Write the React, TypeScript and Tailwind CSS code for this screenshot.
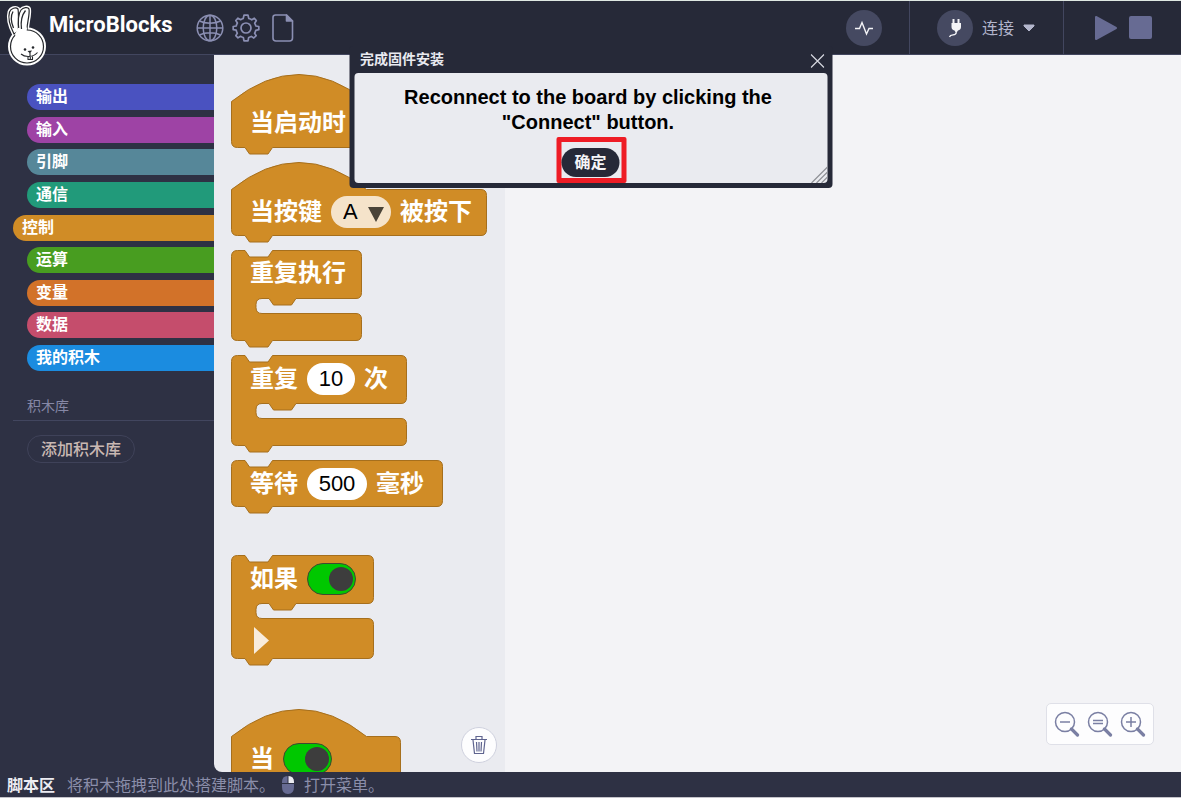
import { useState, type ReactNode } from 'react';

interface Category {
  name: string;
  color: string;
}

const CATEGORIES: Category[] = [
  { name: '输出', color: 'bg-[#4a52c0]' },
  { name: '输入', color: 'bg-[#9e43a5]' },
  { name: '引脚', color: 'bg-[#568799]' },
  { name: '通信', color: 'bg-[#219a7a]' },
  { name: '控制', color: 'bg-[#d08c26]' },
  { name: '运算', color: 'bg-[#489d20]' },
  { name: '变量', color: 'bg-[#d27229]' },
  { name: '数据', color: 'bg-[#c54d6c]' },
  { name: '我的积木', color: 'bg-[#1b8ce0]' },
];

// ---- block outlines ----

const tab = (y: number) => `H41.5 L37 ${y + 6.5} H18.5 L14 ${y}`;
const topEdge = (w: number) => `M6.5 .5 H14 L18.5 7 H37 L41.5 .5 H${w - 6} q5.5 0 5.5 6`;
const bottomEdge = (w: number, y: number) =>
  `V${y - 6} q0 6 -5.5 6 ${tab(y)} H6.5 q-6 0 -6 -6`;

function commandPath(w: number, h: number) {
  return `${topEdge(w)} ${bottomEdge(w, h)} V6.5 q0 -6 6 -6 Z`;
}

function loopPath(w: number, h: number) {
  const mouth = `V42.5 q0 6 -5.5 6 H65 L60.5 55 H42.5 L38 48.5 H31 q-6 0 -6 6 V57.5 q0 6 6 6 H${w - 6} q5.5 0 5.5 6`;
  return `${topEdge(w)} ${mouth} ${bottomEdge(w, h)} V6.5 q0 -6 6 -6 Z`;
}

function hatPath(w: number, h: number) {
  return `M.5 27.5 Q68 -26.5 135.5 27.5 H${w - 6} q5.5 0 5.5 6 ${bottomEdge(w, h)} Z`;
}

interface BlockProps {
  kind: 'hat' | 'command' | 'loop';
  width: number;
  height: number;
  children: ReactNode;
}

function Block({ kind, width, height, children }: BlockProps) {
  const y = height - 0.5;
  const d = kind === 'hat' ? hatPath(width, y) : kind === 'loop' ? loopPath(width, y) : commandPath(width, y);
  return (
    <div className="relative shrink-0" style={{ width, height }}>
      <svg className="absolute inset-0 overflow-visible" width={width} height={height}>
        <path d={d} fill="#d08c26" stroke="#a66f1d" />
      </svg>
      <div
        className={`relative flex items-center gap-[9px] pl-[19px] text-2xl font-bold whitespace-nowrap text-white ${
          kind === 'hat' ? 'pt-[34px]' : 'pt-2'
        }`}
      >
        {children}
      </div>
    </div>
  );
}

const Label = ({ children }: { children: ReactNode }) => (
  <span className="pb-[3px] leading-7">{children}</span>
);

function NumberField({ label, value, wide }: { label: string; value: string; wide?: boolean }) {
  return (
    <input
      aria-label={label}
      defaultValue={value}
      className={`h-8 rounded-full bg-white text-center font-['Liberation_Sans',sans-serif] text-[22px] font-normal text-black ${
        wide ? 'w-[60px]' : 'w-12'
      }`}
    />
  );
}

function KeySelect() {
  return (
    <span className="relative flex">
      <select
        aria-label="按键"
        className="h-8 w-[60px] appearance-none rounded-full bg-[#f5e3ca] pl-3 font-['Liberation_Sans',sans-serif] text-[22px] font-normal text-black"
      >
        <option>A</option>
        <option>B</option>
        <option>A+B</option>
      </select>
      <svg className="pointer-events-none absolute top-[11px] right-[7px]" width="16" height="15">
        <path d="M0 0H16L8 15Z" fill="#4a4338" />
      </svg>
    </span>
  );
}

function Toggle({ label }: { label: string }) {
  const [on, setOn] = useState(true);
  return (
    <label className="relative flex">
      <input
        type="checkbox"
        aria-label={label}
        checked={on}
        onChange={() => setOn(!on)}
        className="h-8 w-[49px] appearance-none rounded-full border border-[#3f4a30] bg-[#d00000] checked:bg-[#00c800]"
      />
      <span
        className={`pointer-events-none absolute top-1 size-6 rounded-full bg-[#3d3d3d] ${on ? 'right-[3px]' : 'left-[3px]'}`}
      />
    </label>
  );
}

// ---- drawings ----

function RabbitLogo() {
  const rear = 'M14 34C10 26 8 17 9.500 12C11 8 16 7 18 9C19 15 18 24 18.500 31Z';
  const front = 'M19 31C18 23 18 14 21 10C23 7.500 28 6.500 29 9C30 15 27 22 27 30Z';
  return (
    <svg className="absolute -top-px left-0 z-10" width="50" height="70" fill="#fff" strokeLinejoin="round">
      <g stroke="#fff" strokeWidth="4">
        <path d={rear} />
        <path d={front} />
        <circle cx="27" cy="46.500" r="17" />
      </g>
      <g stroke="#26282c" strokeWidth="1.200">
        <path d={rear} />
        <path d={front} />
        <circle cx="27" cy="46.500" r="16.500" />
      </g>
      <path d="M15 34L18 28L27 27.500L26.500 33L16 38Z" />
      <g fill="none" stroke="#26282c" strokeWidth="1.300">
        <path d="M13.500 28C11 22 10.500 16 13 11.500M21.500 29C20.500 22 22 15 25.500 10.500" />
      </g>
      <g fill="none" stroke="#26282c" strokeWidth="1.100">
        <path d="M21 54C25 57.500 33 57.500 37.500 52.500M30 53V56M28 57V59.500H32.500V56.500M30.300 57V59" />
      </g>
      <path d="M27.500 51L32 50.500L30 53.500Z" fill="#26282c" />
      <circle cx="25" cy="49.500" r="1.300" fill="#26282c" />
      <circle cx="33" cy="47.500" r="1.300" fill="#26282c" />
    </svg>
  );
}

function GlobeIcon() {
  return (
    <svg width="28" height="28" fill="none" stroke="currentColor" strokeWidth="1.500">
      <circle cx="14" cy="14" r="12.800" />
      <ellipse cx="14" cy="14" rx="6.800" ry="12.800" />
      <path d="M14 1V27M1 14H27M3.500 7C9 10 19 10 24.500 7M3.500 21C9 18 19 18 24.500 21" />
    </svg>
  );
}

function GearIcon() {
  return (
    <svg width="28" height="28" fill="none" stroke="currentColor" strokeWidth="1.700" strokeLinejoin="round">
      <circle cx="14" cy="14" r="5" />
      <path d="M12 1.200H16L16.800 4.500Q18.500 4.900 19.800 5.800L22.300 4.200L24.300 6.500L22.700 9.200Q23.600 10.600 23.800 12L26.800 12.500V15.700L23.800 16.300Q23.400 18 22.600 19.200L24.200 21.600L21.800 24L19.300 22.400Q18 23.200 16.700 23.500L16 26.800H12L11.300 23.500Q9.800 23.100 8.500 22.300L6 23.900L3.800 21.600L5.300 19.200Q4.500 17.800 4.200 16.200L1.200 15.700V12.500L4.200 12Q4.600 10.400 5.400 9L3.800 6.500L6 4.200L8.600 5.700Q10 4.900 11.200 4.500Z" />
    </svg>
  );
}

function FileIcon() {
  return (
    <svg width="22" height="28" fill="none" stroke="currentColor" strokeWidth="1.600" strokeLinejoin="round">
      <path d="M3.500 1H14.500L20.500 7V24Q20.500 27 17.500 27H4Q1 27 1 24V3.500Q1 1 3.500 1Z" />
      <path d="M14.500 1V7H20.500Z" fill="currentColor" />
    </svg>
  );
}

function PlugIcon() {
  return (
    <svg width="36" height="36" fill="#f4f4f7">
      <path d="M15.500 9H17.500V13H20.500V9H22.500V13H24V17Q24 19.500 21 20.500L20 22H18.500L17.500 20.500Q14.500 19.500 14.500 17V13H15.500Z" />
      <path d="M19.200 21.500V22.500C19.200 26.500 13.500 23.500 12.500 27" fill="none" stroke="#f4f4f7" strokeWidth="1.300" />
    </svg>
  );
}

function ZoomIcon({ sign }: { sign: string }) {
  return (
    <svg width="26" height="26" fill="none" stroke="#7a7fa3" strokeWidth="1.500">
      <circle cx="11" cy="11" r="9.500" />
      <path d={sign} />
      <path d="M17.500 18L23.500 24" strokeWidth="3.200" strokeLinecap="round" />
    </svg>
  );
}

function Header() {
  return (
    <header className="relative flex h-[55px] shrink-0 border-t border-b border-t-[#dfe8e2] border-b-[#42465f] bg-[#262938] text-[#8b8fb3]">
      <RabbitLogo />
      <h1 className="ml-[49px] w-[147px] shrink-0 pt-2 font-['Roboto',sans-serif] text-[22px] leading-8 font-bold text-white">
        MicroBlocks
      </h1>
      <nav className="flex items-center gap-2">
        <button aria-label="语言"><GlobeIcon /></button>
        <button aria-label="设置"><GearIcon /></button>
        <button aria-label="文件" className="pl-1"><FileIcon /></button>
      </nav>
      <div className="ml-auto flex">
        <div className="flex items-center pr-[27px]">
          <button aria-label="图表" className="size-9 rounded-full bg-[#454961]">
            <svg width="36" height="36" fill="none" stroke="#f4f4f7" strokeWidth="1.400">
              <path d="M9 18.500H13.500L16 12.500L20.500 24L23 18.500H27" />
            </svg>
          </button>
        </div>
        <div className="flex items-center border-l border-[#42465f] pl-[27px] pr-7">
          <button className="flex items-center gap-[9px] text-base text-[#b3b6cc]">
            <span className="size-9 rounded-full bg-[#454961]"><PlugIcon /></span>
            <span>连接</span>
            <svg width="12" height="8" fill="currentColor" stroke="currentColor" strokeLinejoin="round">
              <path d="M1 1H11V2L6 7L1 2Z" />
            </svg>
          </button>
        </div>
        <div className="flex items-center gap-[11px] border-l border-[#42465f] pr-[29px] pl-[30px]">
          <button aria-label="开始">
            <svg width="24" height="26" fill="#676b93" stroke="#676b93" strokeWidth="2" strokeLinejoin="round">
              <path d="M2 2V24L22 13Z" />
            </svg>
          </button>
          <button aria-label="停止" className="size-[23px] rounded-xs bg-[#676b93]" />
        </div>
      </div>
    </header>
  );
}

function Sidebar({ selected, onSelect }: { selected: string; onSelect: (name: string) => void }) {
  return (
    <aside className="w-[214px] shrink-0 pt-[29px] pl-[13px]">
      <div className="flex h-[287px] flex-col justify-between">
        {CATEGORIES.map(({ name, color }) => (
          <button
            key={name}
            onClick={() => onSelect(name)}
            className={`h-[26px] rounded-l-full pb-[2px] pl-[9px] text-left text-base leading-6 font-bold text-white ${color} ${
              name === selected ? '' : 'ml-[14px]'
            }`}
          >
            {name}
          </button>
        ))}
      </div>
      <h2 className="mt-6 border-b border-[#42465f] pb-1 pl-[14px] text-sm leading-[21px] text-[#8688a6]">积木库</h2>
      <button className="mt-[14px] ml-[14px] h-7 rounded-full border border-[#3f4259] px-[13px] text-base leading-6 font-medium text-[#c9b8b2]">
        添加积木库
      </button>
    </aside>
  );
}

function Palette() {
  return (
    <section className="relative w-[291px] shrink-0 overflow-hidden rounded-bl-lg bg-[#eaebf0]">
      <div className="flex h-full flex-col gap-[14px] overflow-hidden pt-[19px] pl-[17px]">
        <Block kind="hat" width={136} height={74}>
          <Label>当启动时</Label>
        </Block>
        <Block kind="hat" width={256} height={74}>
          <Label>当按键</Label>
          <KeySelect />
          <Label>被按下</Label>
        </Block>
        <Block kind="loop" width={131} height={91}>
          <Label>重复执行</Label>
        </Block>
        <Block kind="loop" width={176} height={91}>
          <Label>重复</Label>
          <NumberField label="重复次数" value="10" />
          <Label>次</Label>
        </Block>
        <Block kind="command" width={212} height={47}>
          <Label>等待</Label>
          <NumberField label="毫秒" value="500" wide />
          <Label>毫秒</Label>
        </Block>
        <div className="mt-[34px] flex flex-col gap-[50px]">
          <div className="relative">
            <Block kind="loop" width={143} height={104}>
              <Label>如果</Label>
              <Toggle label="如果条件" />
            </Block>
            <button aria-label="展开" className="absolute top-[72px] left-[23px]">
              <svg width="15" height="27" fill="#f8ecdc">
                <path d="M0 0L15 13.500L0 27Z" />
              </svg>
            </button>
          </div>
          <Block kind="hat" width={170} height={74}>
            <Label>当</Label>
            <Toggle label="当条件" />
          </Block>
        </div>
      </div>
      <button
        aria-label="删除"
        className="absolute right-2 bottom-[9px] flex size-9 items-center justify-center rounded-full border border-[#cfd1de] bg-[#fdfdfe]"
      >
        <svg width="18" height="20" fill="none" stroke="#5f648f" strokeWidth="1.200">
          <path d="M1 4.500H17M6 4V1.500H12V4M3 5L4.500 18.500H13.500L15 5M6.500 7L7 16.500M9 7V16.500M11.500 7L11 16.500" />
        </svg>
      </button>
    </section>
  );
}

function Workspace() {
  return (
    <main className="relative min-w-0 flex-1 bg-[#f3f3f6]">
      <div className="absolute right-[27px] bottom-[27px] flex h-[42px] items-center gap-[7px] rounded-[5px] border border-[#dfe0e8] bg-[#fdfdfe] px-[7px]">
        <button aria-label="缩小"><ZoomIcon sign="M6 11H16" /></button>
        <button aria-label="原始大小"><ZoomIcon sign="M6 9.500H16M6 12.500H16" /></button>
        <button aria-label="放大"><ZoomIcon sign="M6 11H16M11 6V16" /></button>
      </div>
    </main>
  );
}

function FirmwareDialog({ onClose }: { onClose: () => void }) {
  return (
    <div
      role="dialog"
      aria-labelledby="firmware-title"
      className="absolute top-[46px] left-1/2 z-20 w-[483px] -translate-x-1/2 rounded-[4px] bg-[#262938] px-[5px] pb-[5px]"
    >
      <div className="flex h-[27px] items-center justify-between pr-[3px] pb-[2px] pl-[6px]">
        <h2 id="firmware-title" className="text-sm leading-6 font-bold text-[#e9eaf0]">完成固件安装</h2>
        <button aria-label="关闭" onClick={onClose} className="pt-1">
          <svg width="14" height="14" stroke="#d6d7e0" strokeWidth="1.200">
            <path d="M.5 .5L13.500 13.500M13.500 .5L.5 13.500" />
          </svg>
        </button>
      </div>
      <div className="relative flex h-[110px] flex-col items-center rounded-[4px] bg-[#eaebf0] pt-3">
        <p className="w-[400px] pr-[5px] text-center font-['Liberation_Sans',sans-serif] text-xl leading-[25px] font-bold text-black">
          Reconnect to the board by clicking the "Connect" button.
        </p>
        <div className="mt-[2px] ml-[2px] rounded-xs border-[5px] border-[#ee1c25] pt-[6px] pr-[2px] pb-px">
          <button
            onClick={onClose}
            className="block h-[29px] w-[58px] rounded-full bg-[#262938] pb-px text-base leading-7 font-bold text-[#f4f4f7]"
          >
            确定
          </button>
        </div>
        <svg className="absolute right-0 bottom-0" width="17" height="17" stroke="#8e9096" strokeWidth="1.200">
          <path d="M1 17L17 1M6 17L17 6M11 17L17 11" />
        </svg>
      </div>
    </div>
  );
}

function StatusBar() {
  return (
    <footer className="flex h-[26px] shrink-0 items-center border-b border-[#c4c3ca] pt-px pl-[7px] text-base leading-6 text-[#8b8eaa]">
      <strong className="text-[#ececf2]">脚本区</strong>
      <span className="ml-3">将积木拖拽到此处搭建脚本。</span>
      <svg className="ml-[6px]" width="14" height="20">
        <path d="M1 8V7Q1 1 6.500 1V8ZM1 9H13V12Q13 19 7 19T1 12Z" fill="#676b93" />
        <path d="M7.500 1Q13 1 13 7V8H7.500Z" fill="#ececf2" />
      </svg>
      <span className="ml-[9px]">打开菜单。</span>
    </footer>
  );
}

export default function App() {
  const [category, setCategory] = useState('控制');
  const [dialogOpen, setDialogOpen] = useState(true);

  return (
    <div className="relative flex h-screen flex-col overflow-hidden bg-[#2e3144] font-['Noto_Sans','Noto_Sans_CJK_SC',sans-serif]">
      <Header />
      <div className="flex min-h-0 flex-1">
        <Sidebar selected={category} onSelect={setCategory} />
        <Palette />
        <Workspace />
      </div>
      <StatusBar />
      {dialogOpen && <FirmwareDialog onClose={() => setDialogOpen(false)} />}
    </div>
  );
}
